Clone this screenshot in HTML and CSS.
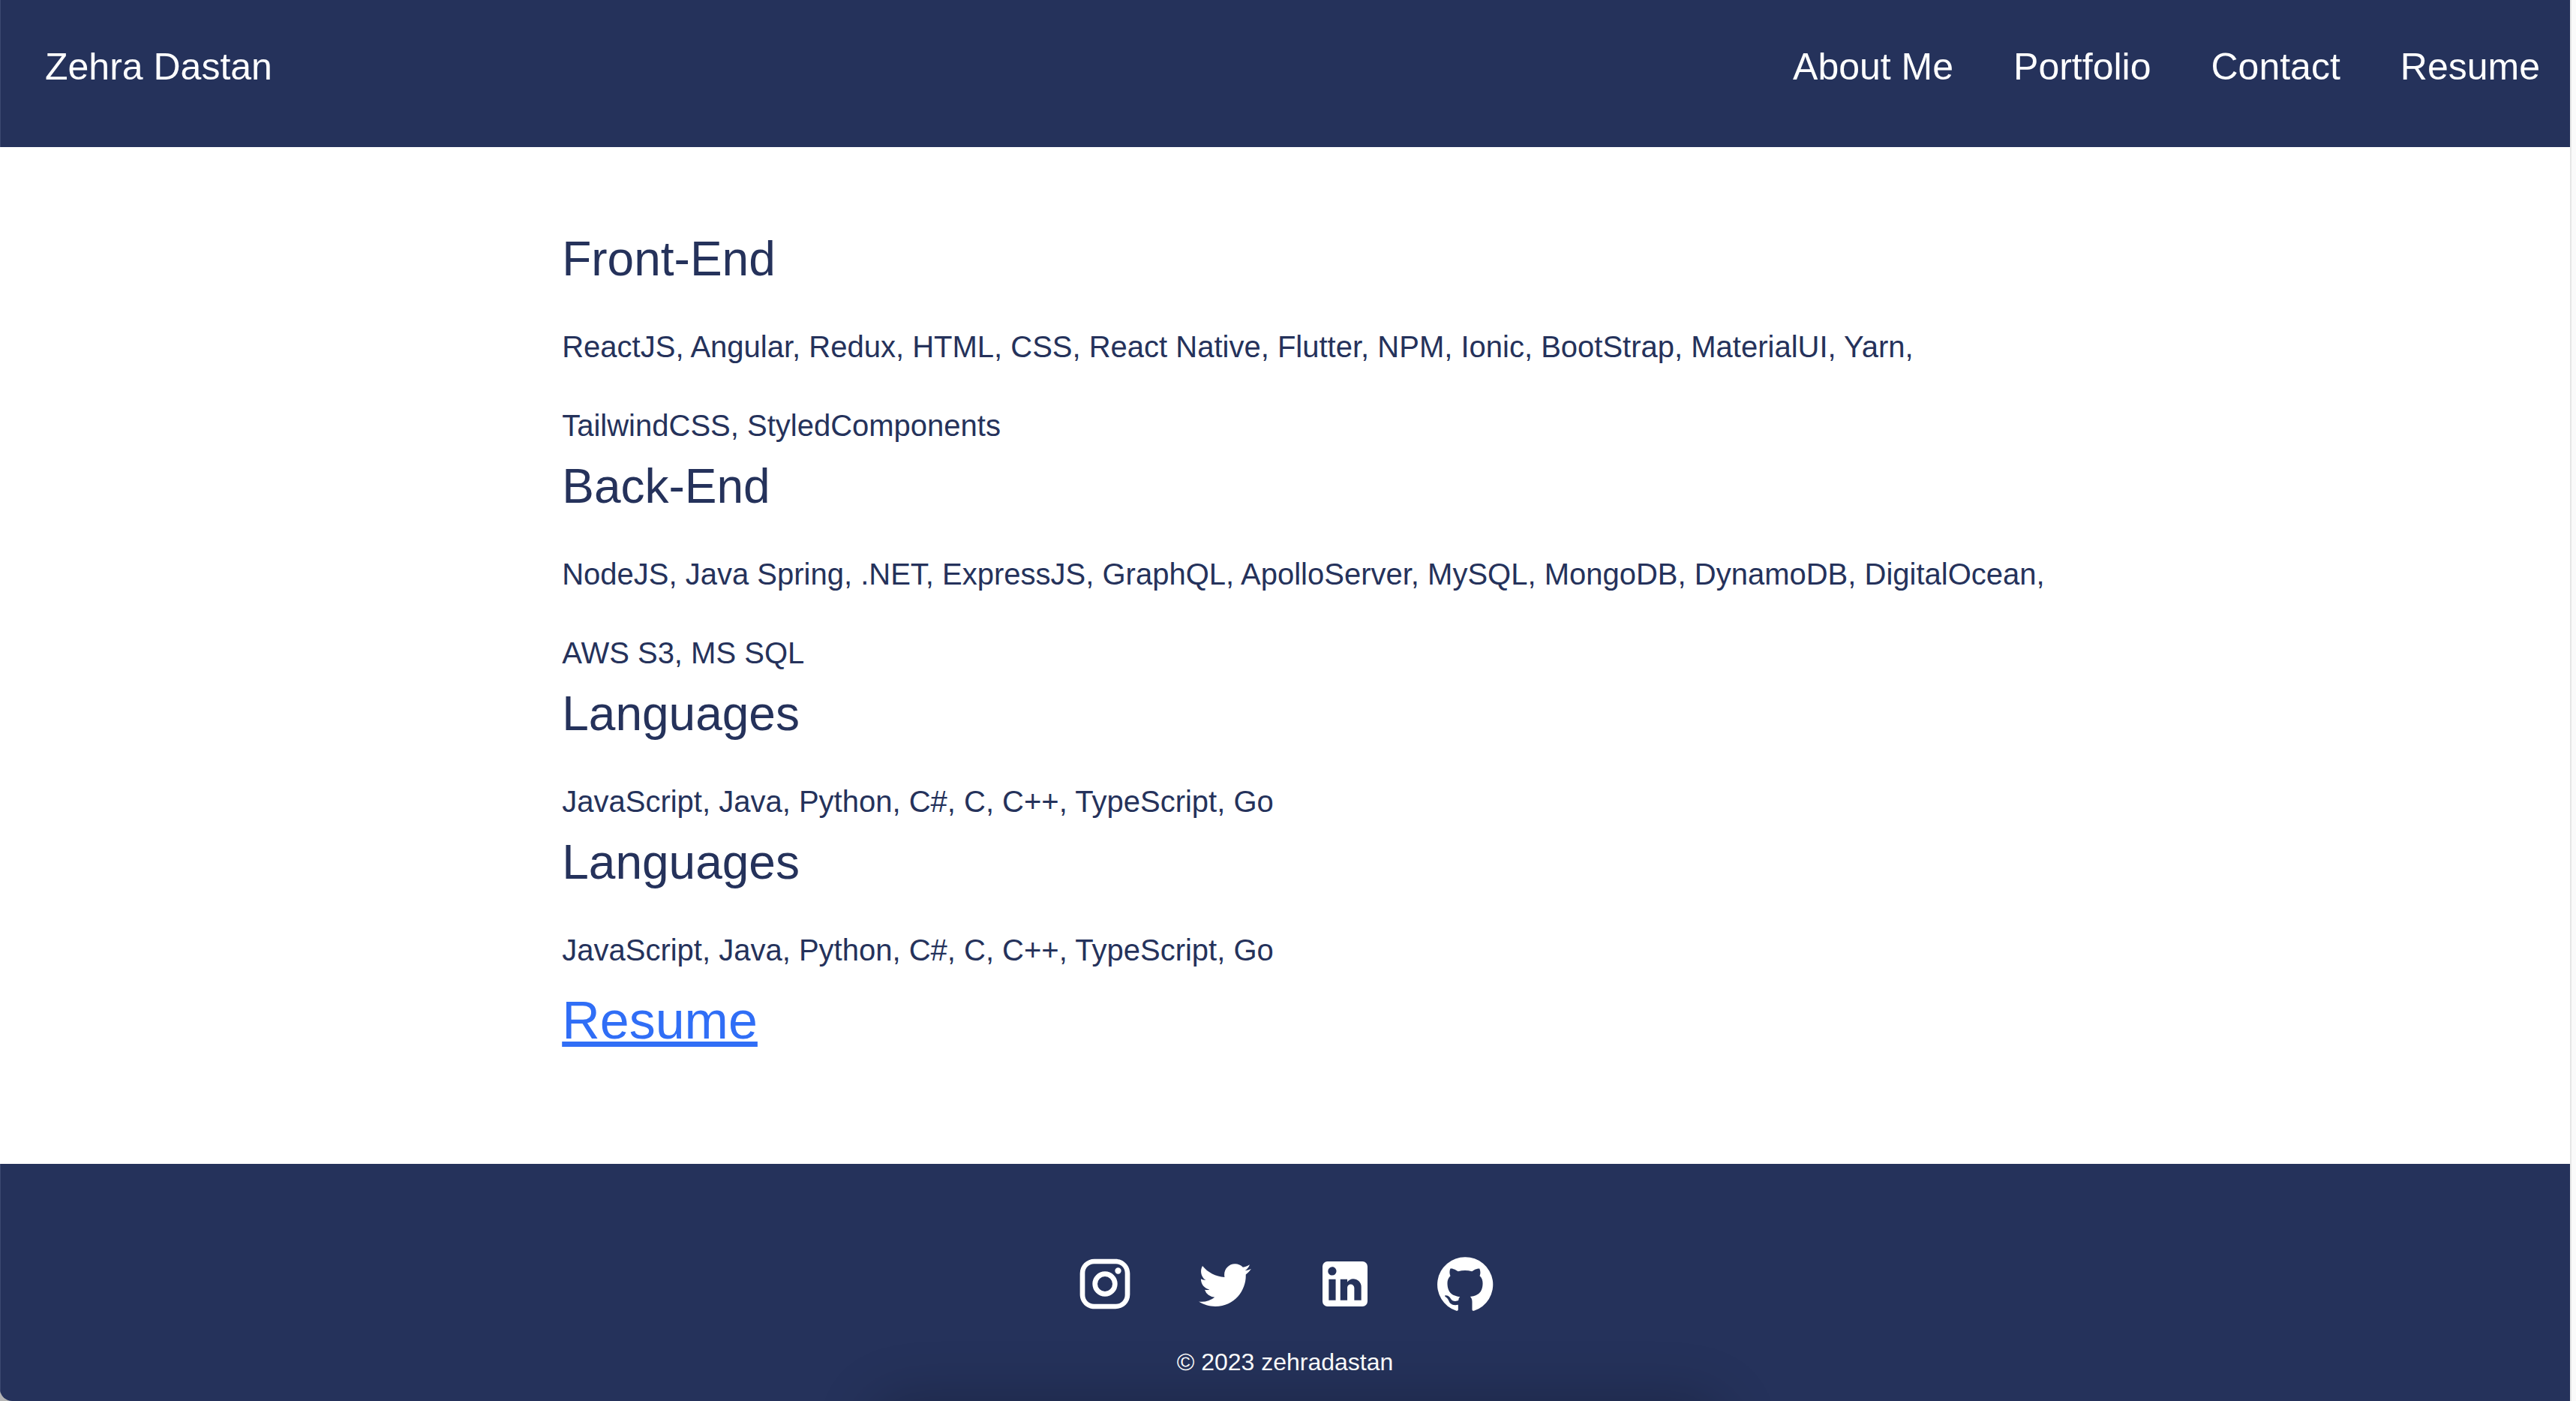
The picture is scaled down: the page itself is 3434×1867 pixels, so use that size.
FILE: index.html
```html
<!DOCTYPE html>
<html lang="en">
<head>
<meta charset="utf-8">
<title>Zehra Dastan</title>
<link rel="stylesheet" href="styles.css">
</head>
<body>
<div class="page">
  <header class="header">
    <a class="brand" href="#">Zehra Dastan</a>
    <nav class="nav">
      <a href="#about">About Me</a>
      <a href="#portfolio">Portfolio</a>
      <a href="#contact">Contact</a>
      <a href="#resume">Resume</a>
    </nav>
  </header>
  <main class="skills">
    <h2>Front-End</h2>
    <p>ReactJS, Angular, Redux, HTML, CSS, React Native, Flutter, NPM, Ionic, BootStrap, MaterialUI, Yarn, TailwindCSS, StyledComponents</p>
    <h2>Back-End</h2>
    <p>NodeJS, Java Spring, .NET, ExpressJS, GraphQL, ApolloServer, MySQL, MongoDB, DynamoDB, DigitalOcean, AWS S3, MS SQL</p>
    <h2>Languages</h2>
    <p>JavaScript, Java, Python, C#, C, C++, TypeScript, Go</p>
    <h2>Languages</h2>
    <p>JavaScript, Java, Python, C#, C, C++, TypeScript, Go</p>
    <a class="resume" href="#resume">Resume</a>
  </main>
  <footer class="footer">
    <div class="social">
      <a href="#instagram" aria-label="Instagram"><svg viewBox="0 0 24 24"><path d="M7.8 2h8.4C19.4 2 22 4.6 22 7.8v8.4a5.8 5.8 0 0 1-5.8 5.8H7.8C4.6 22 2 19.4 2 16.2V7.8A5.8 5.8 0 0 1 7.8 2m-.2 2A3.6 3.6 0 0 0 4 7.6v8.8C4 18.39 5.61 20 7.6 20h8.8a3.6 3.6 0 0 0 3.6-3.6V7.6C20 5.61 18.39 4 16.4 4H7.6m9.65 1.5a1.25 1.25 0 0 1 1.25 1.25A1.25 1.25 0 0 1 17.25 8 1.25 1.25 0 0 1 16 6.75a1.25 1.25 0 0 1 1.25-1.25M12 7a5 5 0 0 1 5 5 5 5 0 0 1-5 5 5 5 0 0 1-5-5 5 5 0 0 1 5-5m0 2a3 3 0 0 0-3 3 3 3 0 0 0 3 3 3 3 0 0 0 3-3 3 3 0 0 0-3-3z"/></svg></a>
      <a href="#twitter" aria-label="Twitter"><svg viewBox="0 0 24 24"><path d="M22.46 6c-.77.35-1.6.58-2.46.69.88-.53 1.56-1.37 1.88-2.38-.83.5-1.75.85-2.72 1.05C18.37 4.5 17.26 4 16 4c-2.35 0-4.27 1.92-4.27 4.29 0 .34.04.67.11.98C8.28 9.09 5.11 7.38 3 4.79c-.37.63-.58 1.37-.58 2.15 0 1.49.75 2.81 1.91 3.56-.71 0-1.37-.2-1.95-.5v.03c0 2.08 1.48 3.82 3.44 4.21a4.22 4.22 0 0 1-1.93.07 4.28 4.28 0 0 0 4 2.98 8.521 8.521 0 0 1-5.33 1.84c-.34 0-.68-.02-1.02-.06C3.44 20.29 5.7 21 8.12 21 16 21 20.33 14.46 20.33 8.79c0-.19 0-.37-.01-.56.84-.6 1.56-1.36 2.14-2.23z"/></svg></a>
      <a href="#linkedin" aria-label="LinkedIn"><svg viewBox="0 0 24 24"><path d="M19 3a2 2 0 0 1 2 2v14a2 2 0 0 1-2 2H5a2 2 0 0 1-2-2V5a2 2 0 0 1 2-2h14m-.5 15.5v-5.3a3.26 3.26 0 0 0-3.26-3.26c-.85 0-1.84.52-2.32 1.3v-1.11h-2.79v8.37h2.79v-4.93c0-.77.62-1.4 1.39-1.4a1.4 1.4 0 0 1 1.4 1.4v4.93h2.79M6.88 8.56a1.68 1.68 0 0 0 1.68-1.68c0-.93-.75-1.69-1.68-1.69a1.69 1.69 0 0 0-1.69 1.69c0 .93.76 1.68 1.69 1.68m1.39 9.94v-8.37H5.5v8.37h2.77z"/></svg></a>
      <a href="#github" aria-label="GitHub"><svg viewBox="0 0 24 24"><path d="M12 1.27a11 11 0 0 0-3.48 21.46c.55.09.73-.28.73-.55v-1.84c-3.03.64-3.67-1.46-3.67-1.46-.55-1.29-1.28-1.65-1.28-1.65-.92-.65.1-.65.1-.65 1.1 0 1.73 1.1 1.73 1.1.92 1.65 2.57 1.2 3.21.92a2 2 0 0 1 .64-1.47c-2.47-.27-5.04-1.19-5.04-5.5 0-1.1.46-2.1 1.2-2.84a3.76 3.76 0 0 1 0-2.93s.91-.28 3.11 1.1c1.8-.49 3.7-.49 5.5 0 2.1-1.38 3.02-1.1 3.02-1.1a3.76 3.76 0 0 1 .1 2.93c.83.74 1.2 1.74 1.2 2.94 0 4.21-2.57 5.13-5.04 5.4.45.37.82.92.82 2.02v3.03c0 .27.1.64.73.55A11 11 0 0 0 12 1.27"/></svg></a>
    </div>
    <p class="copyright">© 2023 zehradastan</p>
  </footer>
</div>
</body>
</html>
```
FILE: styles.css
```css
* {
  box-sizing: border-box;
}

html {
  background: #b4b4b4;
}

body {
  margin: 0;
  font-family: "Liberation Sans", Arial, sans-serif;
  color: #25325b;
}

.page {
  display: flex;
  flex-direction: column;
  min-height: 100vh;
  background: #fff;
  border-right: 6px solid #fafafa;
  border-bottom-left-radius: 16px;
  box-shadow: inset -2px 0 #e6e6e6;
  padding-right: 2px;
  overflow: hidden;
}

.header {
  display: flex;
  justify-content: space-between;
  padding: 60px 40px 78px 60px;
  background: #25325b;
  box-shadow: inset 1px 0 #3c4870;
  font-size: 50px;
  line-height: 58px;
}

.header a {
  color: #fff;
  text-decoration: none;
}

.nav {
  display: flex;
  gap: 80px;
}

.skills {
  width: 60%;
  margin: 0 auto;
  padding: 121px 0 150px 64px;
}

.skills h2 {
  margin: 0;
  font-size: 64px;
  font-weight: 400;
  line-height: 56px;
}

.skills p {
  margin: 37px 0 0;
  font-size: 40px;
  line-height: 105px;
}

.resume {
  display: block;
  font-size: 70px;
  line-height: 82px;
  color: #306ef6;
  text-decoration-thickness: 7px;
  text-underline-offset: 4px;
}

.footer {
  position: relative;
  flex: 1;
  display: flex;
  flex-direction: column;
  align-items: center;
  gap: 46px;
  padding: 120px 0 32px;
  background: #25325b;
  box-shadow: inset 1px 0 #3c4870;
  color: #fff;
}

/* soft shade along the bottom edge */
.footer::after {
  content: "";
  position: absolute;
  top: 100%;
  left: 34%;
  width: 33%;
  height: 120px;
  border-radius: 40px;
  box-shadow: 0 0 80px rgba(0, 0, 0, 0.24);
}

.social {
  display: flex;
  gap: 80px;
}

.social svg {
  display: block;
  width: 80px;
  height: 80px;
  fill: #fff;
}

.copyright {
  margin: 0;
  font-size: 32px;
  line-height: 36px;
}
```
